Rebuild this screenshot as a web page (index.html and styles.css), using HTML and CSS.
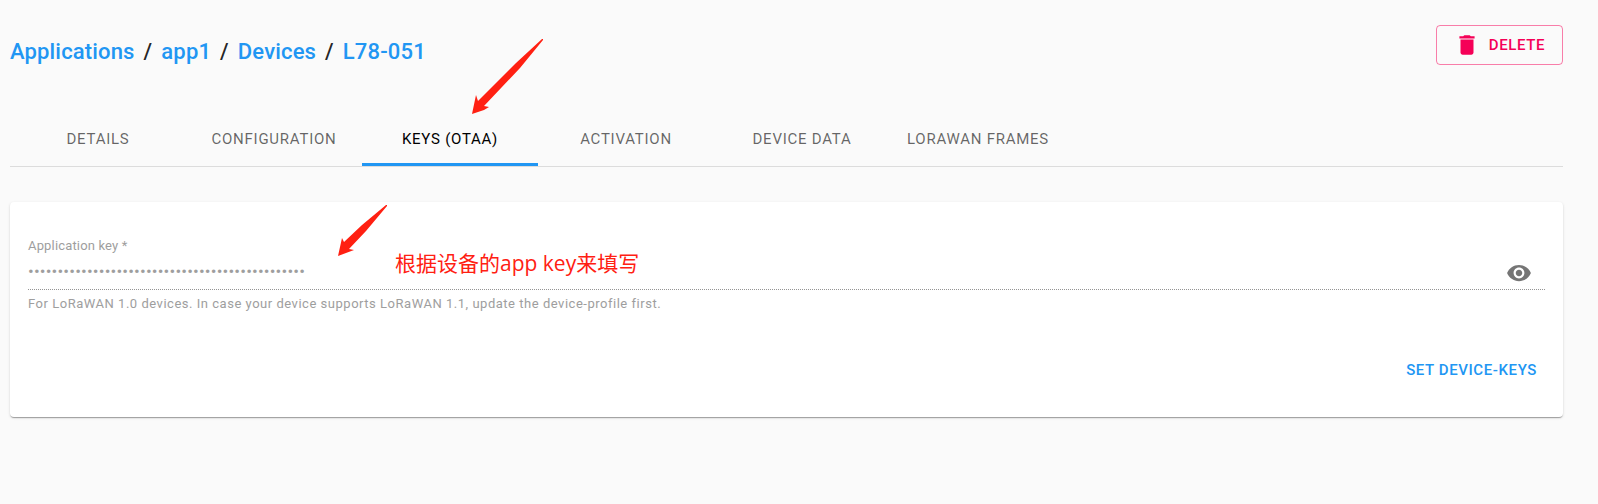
FILE: index.html
```html
<!DOCTYPE html>
<html lang="en">
<head>
<meta charset="utf-8">
<title>L78-051 - Device keys</title>
<link rel="stylesheet" href="styles.css">
</head>
<body>
<main class="page">
  <header class="title-bar">
    <nav class="breadcrumb" aria-label="Breadcrumb">
      <a href="#applications">Applications</a>
      <span>/</span>
      <a href="#app1">app1</a>
      <span>/</span>
      <a href="#devices">Devices</a>
      <span>/</span>
      <a href="#device">L78-051</a>
    </nav>
    <button class="delete-button" type="button">
      <svg class="delete-icon" viewBox="0 0 24 24" aria-hidden="true"><path d="M6 19c0 1.100.9 2 2 2h8c1.100 0 2-.9 2-2V7H6v12zM19 4h-3.500l-1-1h-5l-1 1H5v2h14V4z"/></svg>
      Delete
    </button>
  </header>

  <nav class="tabs" aria-label="Device sections">
    <a class="tab" href="#details">Details</a>
    <a class="tab" href="#configuration">Configuration</a>
    <a class="tab tab-active" href="#keys" aria-current="page">Keys (OTAA)</a>
    <a class="tab" href="#activation">Activation</a>
    <a class="tab" href="#data">Device data</a>
    <a class="tab" href="#frames">LoRaWAN frames</a>
  </nav>

  <form class="card">
    <label class="field-label" for="app-key">Application key *</label>
    <div class="field">
      <input class="field-input" id="app-key" type="password" value="00000000000000000000000000000000000000000000000" aria-describedby="app-key-help" disabled>
      <button class="eye-button" type="button" aria-label="Toggle key visibility">
        <svg class="eye-icon" viewBox="0 0 24 24" aria-hidden="true"><path d="M12 4.500C7 4.500 2.730 7.610 1 12c1.730 4.390 6 7.500 11 7.500s9.270-3.110 11-7.500c-1.730-4.390-6-7.500-11-7.500zM12 17c-2.760 0-5-2.240-5-5s2.240-5 5-5 5 2.240 5 5-2.240 5-5 5zm0-8c-1.660 0-3 1.340-3 3s1.340 3 3 3 3-1.340 3-3-1.340-3-3-3z"/></svg>
      </button>
    </div>
    <p class="field-help" id="app-key-help">For LoRaWAN 1.0 devices. In case your device supports LoRaWAN 1.1, update the device-profile first.</p>
    <div class="actions">
      <button class="submit-button" type="button">Set device-keys</button>
    </div>
  </form>
</main>

<svg class="arrow arrow-tab" viewBox="0 0 71 75" aria-hidden="true"><path d="M71 0 71 1 48 29 12 67 17 68 12 71 0 75 4 56 6 62 44 24 70 0Z"/></svg>
<svg class="arrow arrow-key" viewBox="0 0 49 51" aria-hidden="true"><path d="M49 0 49 1 28 26 11 44 16 45 0 51 4 33 6 37 24 20 48 0Z"/></svg>
<p class="note" lang="zh-CN">根据设备的app key来填写</p>
</body>
</html>
```
FILE: styles.css
```css
* {
  box-sizing: border-box;
}

body {
  position: relative;
  margin: 0;
  background: #fafafa;
  color: rgba(0, 0, 0, 0.87);
  font-family: Roboto, sans-serif;
  letter-spacing: 0.01em;
}

a {
  color: inherit;
  text-decoration: none;
}

button {
  border: 0;
  background: none;
  font-family: inherit;
  font-size: 15px;
  font-weight: 500;
  letter-spacing: 0.04em;
  text-transform: uppercase;
  cursor: pointer;
}

.page {
  padding: 25px 35px 25px 10px;
}

.title-bar {
  display: flex;
  align-items: flex-start;
  justify-content: space-between;
}

.breadcrumb {
  display: flex;
  gap: 9px;
  padding-top: 8px;
  font-size: 22px;
  font-weight: 500;
  line-height: 38px;
}

.breadcrumb a {
  color: #2196f3;
}

.delete-button {
  display: flex;
  align-items: center;
  gap: 9px;
  height: 40px;
  padding: 0 17px;
  border: 1px solid rgba(245, 0, 87, 0.5);
  border-radius: 4px;
  color: #f50057;
}

.delete-icon {
  width: 26px;
  height: 26px;
  fill: currentColor;
}

.tabs {
  display: flex;
  margin-top: 38px;
  border-bottom: 1px solid #dcdcdc;
}

.tab {
  width: 176px;
  height: 57px;
  border-bottom: 3px solid transparent;
  color: rgba(0, 0, 0, 0.6);
  font-size: 15px;
  letter-spacing: 0.05em;
  line-height: 60px;
  text-align: center;
  text-transform: uppercase;
}

.tab-active {
  border-color: #2196f3;
  color: #000;
}

.card {
  margin: 35px 0 0;
  padding: 34px 18px 27px;
  border-radius: 4px;
  background: #fff;
  box-shadow: 0 2px 1px -1px rgba(0, 0, 0, 0.2), 0 1px 1px 0 rgba(0, 0, 0, 0.14), 0 1px 3px 0 rgba(0, 0, 0, 0.12);
}

.field-label {
  display: block;
  color: #9e9e9e;
  font-size: 13px;
  line-height: 20px;
}

.field {
  display: flex;
  align-items: center;
  height: 34px;
  border-bottom: 1px dotted #949494;
}

.field-input {
  flex: 1;
  min-width: 0;
  padding: 0 0 4px;
  border: 0;
  background: none;
  color: #9e9e9e;
  font-family: inherit;
  font-size: 17px;
  letter-spacing: inherit;
}

.eye-button {
  display: flex;
  padding: 0 13px;
  color: #757575;
}

.eye-icon {
  width: 26px;
  height: 26px;
  fill: currentColor;
}

.field-help {
  margin: 4px 0 0;
  color: #9e9e9e;
  font-size: 13px;
  letter-spacing: 0.04em;
  line-height: 20px;
}

.actions {
  display: flex;
  justify-content: flex-end;
  margin-top: 36px;
}

.submit-button {
  height: 40px;
  padding: 0 8px;
  color: #2196f3;
}

.arrow {
  position: absolute;
  fill: #ff2012;
}

.arrow-tab {
  top: 39px;
  left: 472px;
  width: 71px;
  height: 75px;
}

.arrow-key {
  top: 205px;
  left: 338px;
  width: 49px;
  height: 51px;
}

.note {
  position: absolute;
  top: 247px;
  left: 395px;
  margin: 0;
  color: #ff2012;
  font-family: "Open Sans", "Noto Sans CJK SC", sans-serif;
  font-size: 21px;
  letter-spacing: normal;
  line-height: 32px;
}
```
